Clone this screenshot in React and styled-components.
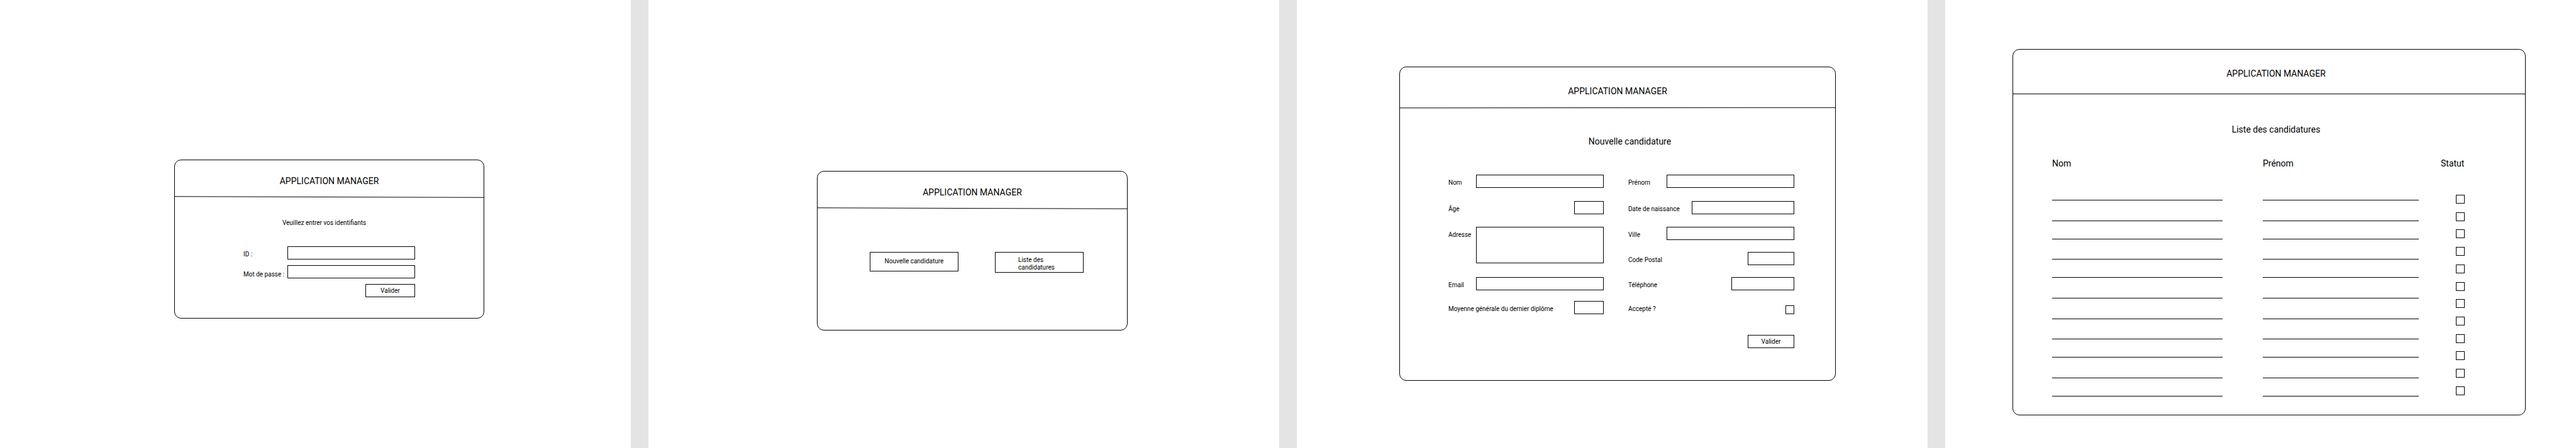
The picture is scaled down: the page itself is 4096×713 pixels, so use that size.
import React from "react";
import styled, { createGlobalStyle } from "styled-components";

const GlobalStyle = createGlobalStyle`
  *, *::before, *::after { box-sizing: border-box; }
  body {
    margin: 0;
    background: #e4e4e4;
    color: #000;
    font-family: Roboto, "Liberation Sans", sans-serif;
    font-size: 10px;
    line-height: 12px;
  }
  h1, h2, p, ul, th, td { margin: 0; padding: 0; }
  input, textarea, button { font: inherit; color: inherit; }
`;

const Board = styled.main`
  display: grid;
  grid-template-columns: repeat(4, minmax(0, 1fr));
  gap: 28px;
  min-height: 100vh;
`;

const Screen = styled.section`
  background: #fff;
  padding: ${(p) => p.$inset};
`;

const Card = styled.article`
  border: 1px solid #000;
  border-radius: 11px;
`;

const CardHeader = styled.header`
  padding: ${(p) => p.$padding};
  text-align: center;
`;

const Title = styled.h1`
  font-size: 14px;
  line-height: 16px;
  font-weight: 400;
`;

const Divider = styled.hr`
  height: 1px;
  margin: 0;
  border: 0;
  background: #000;
  transform: skewY(${(p) => p.$tilt || "0deg"});
`;

const Subtitle = styled.h2`
  padding: ${(p) => p.$padding};
  font-size: 14px;
  line-height: 16px;
  font-weight: 400;
  text-align: center;
`;

const Prompt = styled.p`
  padding: 35px 16px 31px 0;
  text-align: center;
`;

const LoginForm = styled.form`
  display: grid;
  grid-template-columns: 70px 203px;
  justify-content: center;
  row-gap: 9px;
  padding-bottom: 33px;
`;

const Label = styled.label`
  padding-top: 7px;
  white-space: nowrap;
  align-self: ${(p) => p.$align || "start"};
`;

const TextInput = styled.input`
  width: ${(p) => p.$width || 203}px;
  height: 21px;
  padding: 0 4px;
  border: 1px solid #000;
  border-radius: 0;
  background: #fff;
`;

const TextArea = styled.textarea`
  display: block;
  width: 203px;
  height: 58px;
  padding: 4px;
  border: 1px solid #000;
  border-radius: 0;
  background: #fff;
  resize: none;
`;

const CheckBox = styled.input`
  appearance: none;
  display: block;
  width: 14px;
  height: 14px;
  margin: 0;
  border: 1px solid #000;
  background: #fff;
  &:checked { background: #000; }
`;

const Button = styled.button`
  width: ${(p) => p.$width}px;
  height: 21px;
  padding: 0;
  border: 1px solid #000;
  border-radius: 0;
  background: #fff;
  grid-column: 2;
  justify-self: end;
`;

const Menu = styled.nav`
  display: flex;
  justify-content: center;
  align-items: flex-start;
  gap: 58px;
  padding: 69px 0 91px 14px;
`;

const MenuButton = styled.button`
  width: 141px;
  padding: ${(p) => p.$padding};
  border: 1px solid #000;
  border-radius: 0;
  background: #fff;
  text-align: ${(p) => p.$align || "center"};
`;

const CandidateForm = styled.form`
  display: grid;
  grid-template-columns: 247px 264px;
  grid-template-rows: 42px 41px 40px 40px 38px 54px 21px;
  justify-content: space-between;
  padding: 0 65px 51px 77px;
`;

const Field = styled.div`
  display: flex;
  justify-content: space-between;
  align-items: flex-start;
  grid-row-end: span ${(p) => p.$rows || 1};
  ${CheckBox} { margin-top: 7px; }
`;

const CandidateTable = styled.table`
  width: 100%;
  table-layout: fixed;
  border-collapse: collapse;
  th {
    height: 58px;
    font-size: 14px;
    line-height: 16px;
    font-weight: 400;
    text-align: left;
    vertical-align: top;
  }
  td { vertical-align: top; }
`;

const TableArea = styled.div`
  padding: 38px 0 29px 62px;
`;

const Column = styled.col`
  width: ${(p) => (p.$width ? `${p.$width}px` : "auto")};
`;

const Lines = styled.ul`
  width: ${(p) => p.$width}px;
  list-style: none;
`;

const Line = styled.li`
  height: ${(p) => p.$height}px;
  border-bottom: 1px solid #000;
`;

const StatusList = styled.div`
  display: flex;
  flex-direction: column;
  justify-content: space-between;
  height: 319px;
  padding-left: 24px;
`;

const FIELDS = [
  { id: "nom", label: "Nom" },
  { id: "prenom", label: "Prénom" },
  { id: "age", label: "Âge", width: 47 },
  { id: "naissance", label: "Date de naissance", width: 163 },
  { id: "adresse", label: "Adresse", kind: "area", rows: 2 },
  { id: "ville", label: "Ville" },
  { id: "cp", label: "Code Postal", width: 74 },
  { id: "email", label: "Email" },
  { id: "tel", label: "Téléphone", width: 100 },
  { id: "moyenne", label: "Moyenne générale du dernier diplôme", width: 47 },
  { id: "accepte", label: "Accepté ?", kind: "check" },
];

const LINE_HEIGHTS = [9, 33, 29, 32, 29, 33, 33, 32, 29, 33, 29];
const STATUS_COUNT = 12;

function Control({ id, kind, width }) {
  if (kind === "area") return <TextArea id={id} />;
  if (kind === "check") return <CheckBox id={id} type="checkbox" />;
  return <TextInput id={id} type="text" $width={width} />;
}

function AppCard({ headerPadding, tilt, children }) {
  return (
    <Card>
      <CardHeader $padding={headerPadding}>
        <Title>APPLICATION MANAGER</Title>
      </CardHeader>
      <Divider $tilt={tilt} />
      {children}
    </Card>
  );
}

function BlankLines({ width }) {
  return (
    <Lines $width={width}>
      {LINE_HEIGHTS.map((height, i) => (
        <Line key={i} $height={height} />
      ))}
    </Lines>
  );
}

export default function App() {
  return (
    <>
      <GlobalStyle />
      <Board>
        <Screen $inset="254px 233px 0 277px">
          <AppCard headerPadding="25px 0 17px" tilt="0.16deg">
            <Prompt>Veuillez entrer vos identifiants</Prompt>
            <LoginForm onSubmit={(e) => e.preventDefault()}>
              <Label htmlFor="login">ID :</Label>
              <TextInput id="login" type="text" />
              <Label htmlFor="password" $align="end">Mot de passe :</Label>
              <TextInput id="password" type="password" />
              <Button type="submit" $width={79}>Valider</Button>
            </LoginForm>
          </AppCard>
        </Screen>

        <Screen $inset="272px 241px 0 268px">
          <AppCard headerPadding="25px 0 17px" tilt="0.16deg">
            <Menu>
              <MenuButton type="button" $padding="8px 0 9px">
                Nouvelle candidature
              </MenuButton>
              <MenuButton type="button" $padding="6px 36px 1px" $align="left">
                Liste des candidatures
              </MenuButton>
            </Menu>
          </AppCard>
        </Screen>

        <Screen $inset="106px 146px 0 163px">
          <AppCard headerPadding="30px 0 18px" tilt="-0.06deg">
            <Subtitle $padding="45px 0 45px 39px">Nouvelle candidature</Subtitle>
            <CandidateForm onSubmit={(e) => e.preventDefault()}>
              {FIELDS.map((f) => (
                <Field key={f.id} $rows={f.rows}>
                  <Label htmlFor={f.id}>{f.label}</Label>
                  <Control id={f.id} kind={f.kind} width={f.width} />
                </Field>
              ))}
              <Button type="submit" $width={74}>Valider</Button>
            </CandidateForm>
          </AppCard>
        </Screen>

        <Screen $inset="78px 80px 0 107px">
          <AppCard headerPadding="30px 0 24px 22px">
            <Subtitle $padding="48px 0 0 22px">Liste des candidatures</Subtitle>
            <TableArea>
              <CandidateTable>
                <colgroup>
                  <Column $width={335} />
                  <Column $width={283} />
                  <Column />
                </colgroup>
                <thead>
                  <tr>
                    <th scope="col">Nom</th>
                    <th scope="col">Prénom</th>
                    <th scope="col">Statut</th>
                  </tr>
                </thead>
                <tbody>
                  <tr>
                    <td><BlankLines width={271} /></td>
                    <td><BlankLines width={248} /></td>
                    <td>
                      <StatusList>
                        {Array.from({ length: STATUS_COUNT }, (_, i) => (
                          <CheckBox key={i} type="checkbox" aria-label={`Statut ${i + 1}`} />
                        ))}
                      </StatusList>
                    </td>
                  </tr>
                </tbody>
              </CandidateTable>
            </TableArea>
          </AppCard>
        </Screen>
      </Board>
    </>
  );
}
